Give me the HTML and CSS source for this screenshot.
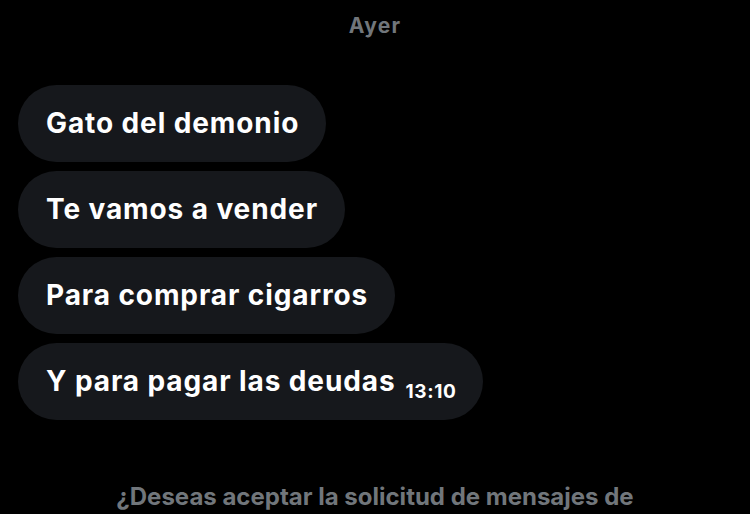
FILE: index.html
```html
<!DOCTYPE html>
<html lang="es">
<head>
<meta charset="utf-8">
<link rel="stylesheet" href="styles.css">
</head>
<body>
<div class="screen">
  <div class="day">Ayer</div>
  <div class="messages">
    <div class="bubble">Gato del demonio</div>
    <div class="bubble">Te vamos a vender</div>
    <div class="bubble">Para comprar cigarros</div>
    <div class="bubble">Y para pagar las deudas<span class="time">13:10</span></div>
  </div>
  <div class="request">¿Deseas aceptar la solicitud de mensajes de</div>
</div>
</body>
</html>
```
FILE: styles.css
```css
html, body {
  margin: 0;
  padding: 0;
  background: #000;
}
.screen {
  width: 750px;
  height: 514px;
  overflow: hidden;
  font-family: Inter, "Noto Sans", sans-serif;
  font-weight: 700;
  display: flex;
  flex-direction: column;
}
.day {
  text-align: center;
  color: #71767b;
  font-size: 21px;
  line-height: 24px;
  letter-spacing: 1.2px;
  padding-top: 14px;
}
.messages {
  display: flex;
  flex-direction: column;
  align-items: flex-start;
  gap: 9px;
  padding: 47px 0 0 18px;
}
.bubble {
  background: #16181c;
  color: #fff;
  font-size: 28px;
  line-height: 31px;
  letter-spacing: 0.9px;
  padding: 23px 27px 23px 28px;
  border-radius: 39px;
  white-space: nowrap;
}
.time {
  font-size: 19px;
  line-height: 0;
  letter-spacing: 0.6px;
  margin-left: 10px;
  position: relative;
  top: 7px;
}
.request {
  margin-top: auto;
  text-align: center;
  color: #71767b;
  font-size: 24px;
  line-height: 28px;
  padding-bottom: 3px;
}
```
